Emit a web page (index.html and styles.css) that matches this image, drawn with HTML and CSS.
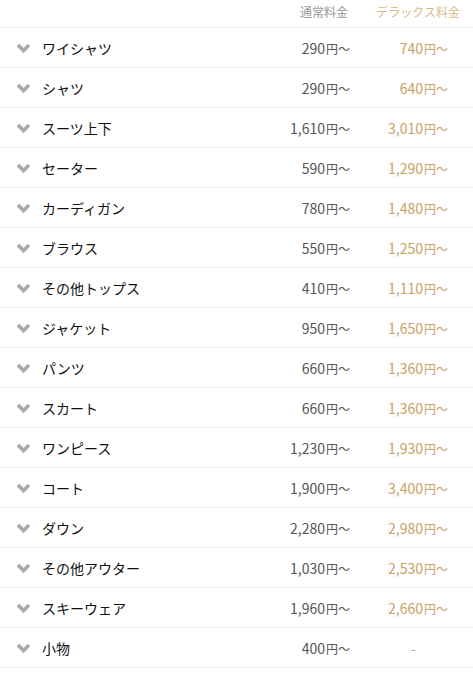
FILE: index.html
```html
<!DOCTYPE html>
<html lang="ja">
<head>
<meta charset="utf-8">
<link rel="stylesheet" href="styles.css">
</head>
<body>
<div class="table">
  <div class="row head">
    <div></div>
    <div></div>
    <div class="h-reg">通常料金</div>
    <div class="h-dx">デラックス料金</div>
  </div>
  <div class="row"><svg class="chev" viewBox="0 0 15 10"><path d="M2 2 L7.5 7.5 L13 2"/></svg><div class="name">ワイシャツ</div><div class="reg">290<span class="yen">円〜</span></div><div class="dx">740<span class="yen">円〜</span></div></div>
  <div class="row"><svg class="chev" viewBox="0 0 15 10"><path d="M2 2 L7.5 7.5 L13 2"/></svg><div class="name">シャツ</div><div class="reg">290<span class="yen">円〜</span></div><div class="dx">640<span class="yen">円〜</span></div></div>
  <div class="row"><svg class="chev" viewBox="0 0 15 10"><path d="M2 2 L7.5 7.5 L13 2"/></svg><div class="name">スーツ上下</div><div class="reg">1,610<span class="yen">円〜</span></div><div class="dx">3,010<span class="yen">円〜</span></div></div>
  <div class="row"><svg class="chev" viewBox="0 0 15 10"><path d="M2 2 L7.5 7.5 L13 2"/></svg><div class="name">セーター</div><div class="reg">590<span class="yen">円〜</span></div><div class="dx">1,290<span class="yen">円〜</span></div></div>
  <div class="row"><svg class="chev" viewBox="0 0 15 10"><path d="M2 2 L7.5 7.5 L13 2"/></svg><div class="name">カーディガン</div><div class="reg">780<span class="yen">円〜</span></div><div class="dx">1,480<span class="yen">円〜</span></div></div>
  <div class="row"><svg class="chev" viewBox="0 0 15 10"><path d="M2 2 L7.5 7.5 L13 2"/></svg><div class="name">ブラウス</div><div class="reg">550<span class="yen">円〜</span></div><div class="dx">1,250<span class="yen">円〜</span></div></div>
  <div class="row"><svg class="chev" viewBox="0 0 15 10"><path d="M2 2 L7.5 7.5 L13 2"/></svg><div class="name">その他トップス</div><div class="reg">410<span class="yen">円〜</span></div><div class="dx">1,110<span class="yen">円〜</span></div></div>
  <div class="row"><svg class="chev" viewBox="0 0 15 10"><path d="M2 2 L7.5 7.5 L13 2"/></svg><div class="name">ジャケット</div><div class="reg">950<span class="yen">円〜</span></div><div class="dx">1,650<span class="yen">円〜</span></div></div>
  <div class="row"><svg class="chev" viewBox="0 0 15 10"><path d="M2 2 L7.5 7.5 L13 2"/></svg><div class="name">パンツ</div><div class="reg">660<span class="yen">円〜</span></div><div class="dx">1,360<span class="yen">円〜</span></div></div>
  <div class="row"><svg class="chev" viewBox="0 0 15 10"><path d="M2 2 L7.5 7.5 L13 2"/></svg><div class="name">スカート</div><div class="reg">660<span class="yen">円〜</span></div><div class="dx">1,360<span class="yen">円〜</span></div></div>
  <div class="row"><svg class="chev" viewBox="0 0 15 10"><path d="M2 2 L7.5 7.5 L13 2"/></svg><div class="name">ワンピース</div><div class="reg">1,230<span class="yen">円〜</span></div><div class="dx">1,930<span class="yen">円〜</span></div></div>
  <div class="row"><svg class="chev" viewBox="0 0 15 10"><path d="M2 2 L7.5 7.5 L13 2"/></svg><div class="name">コート</div><div class="reg">1,900<span class="yen">円〜</span></div><div class="dx">3,400<span class="yen">円〜</span></div></div>
  <div class="row"><svg class="chev" viewBox="0 0 15 10"><path d="M2 2 L7.5 7.5 L13 2"/></svg><div class="name">ダウン</div><div class="reg">2,280<span class="yen">円〜</span></div><div class="dx">2,980<span class="yen">円〜</span></div></div>
  <div class="row"><svg class="chev" viewBox="0 0 15 10"><path d="M2 2 L7.5 7.5 L13 2"/></svg><div class="name">その他アウター</div><div class="reg">1,030<span class="yen">円〜</span></div><div class="dx">2,530<span class="yen">円〜</span></div></div>
  <div class="row"><svg class="chev" viewBox="0 0 15 10"><path d="M2 2 L7.5 7.5 L13 2"/></svg><div class="name">スキーウェア</div><div class="reg">1,960<span class="yen">円〜</span></div><div class="dx">2,660<span class="yen">円〜</span></div></div>
  <div class="row"><svg class="chev" viewBox="0 0 15 10"><path d="M2 2 L7.5 7.5 L13 2"/></svg><div class="name">小物</div><div class="reg">400<span class="yen">円〜</span></div><div class="dx none">-</div></div>
</div>
</body>
</html>
```
FILE: styles.css
```css
body{
  margin:0;
  background:#fff;
  font-family:"Noto Sans CJK JP",sans-serif;
}
.table{
  display:flex;
  flex-direction:column;
}
.row{
  display:grid;
  grid-template-columns:42px 1fr 110px 123px;
  align-items:center;
  height:39px;
  border-bottom:1px solid #f0f0f0;
}
.row.head{
  height:27px;
  font-size:12px;
}
.h-reg{
  color:#999;
  text-align:right;
  padding-right:2px;
  padding-bottom:4px;
}
.h-dx{
  color:#d8bc8a;
  text-align:right;
  padding-right:13px;
  padding-bottom:4px;
}
.chev{
  width:15px;
  height:10px;
  margin-left:16px;
  fill:none;
  stroke:#aaa;
  stroke-width:3.8;
}
.name{
  font-size:14px;
  color:#111;
}
.reg,.dx{
  font-size:14px;
  text-align:right;
  color:#555;
}
.dx{
  color:#c9a062;
  padding-right:25px;
}
.dx.none{
  text-align:center;
  padding-right:0;
  padding-left:4px;
}
.yen{
  font-size:12px;
  margin-left:1px;
}
```
